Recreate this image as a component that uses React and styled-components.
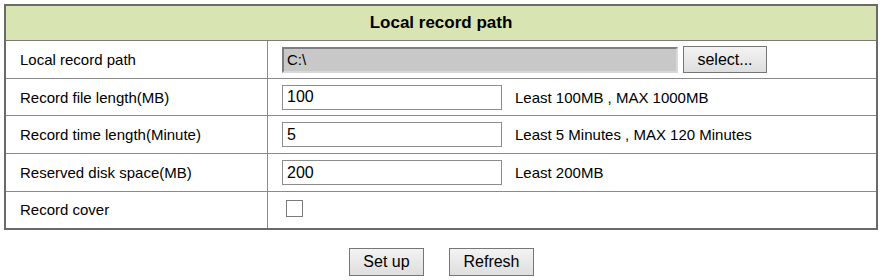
import React from "react";
import styled, { createGlobalStyle } from "styled-components";

const GlobalStyle = createGlobalStyle`
  body {
    margin: 0;
    background: #ffffff;
    font-family: "Liberation Sans", Arial, sans-serif;
    color: #000;
  }
`;

const Page = styled.div`
  padding: 4px 4px 0 4px;
  width: 882px;
  box-sizing: border-box;
`;

const Table = styled.table`
  width: 874px;
  border-collapse: collapse;
  border: 2px solid #6a6a6a;
  font-size: 15px;
`;

const HeadCell = styled.th`
  height: 34px;
  padding: 0;
  background: #d8e5b2;
  border: 1px solid #7a7a7a;
  font-size: 17px;
  font-weight: bold;
  text-align: center;
`;

const Row = styled.tr`
  height: ${p => p.h || 37}px;
`;

const Label = styled.td`
  width: 247px;
  padding: 0 0 0 14px;
  border: 1px solid #8a8a8a;
  text-align: left;
`;

const Value = styled.td`
  padding: 0 0 0 14px;
  border: 1px solid #8a8a8a;
`;

const Line = styled.div`
  display: flex;
  align-items: center;
  gap: ${p => p.gap || 13}px;
`;

const PathBox = styled.input`
  width: 396px;
  height: 26px;
  box-sizing: border-box;
  padding: 0 3px;
  background: #c8c8c8;
  border: 2px solid;
  border-color: #7e7e7e #d8d8d8 #d8d8d8 #7e7e7e;
  font: 15px "Liberation Sans", Arial, sans-serif;
  color: #000;
  outline: none;
`;

const TextBox = styled.input`
  width: 220px;
  height: 25px;
  box-sizing: border-box;
  padding: 0 4px;
  border: 1px solid #8c8c8c;
  background: #fff;
  font: 16px "Liberation Sans", Arial, sans-serif;
  color: #000;
  outline: none;
`;

const Button = styled.button`
  width: ${p => p.w}px;
  height: ${p => p.hgt || 28}px;
  padding: 0;
  border: 1px solid #767676;
  background: linear-gradient(#f3f3f3, #dedede);
  font: 16px "Liberation Sans", Arial, sans-serif;
  color: #000;
  cursor: pointer;
`;

const Hint = styled.span`
  font-size: 15px;
`;

const Check = styled.span`
  display: inline-block;
  width: 15px;
  height: 15px;
  border: 1px solid #7a7a7a;
  background: #fff;
  margin-left: 4px;
`;

const Actions = styled.div`
  display: flex;
  justify-content: center;
  gap: 25px;
  margin-top: 18px;
  padding-left: 1px;
`;

const rows = [
  { label: "Record file length(MB)", value: "100", hint: "Least 100MB , MAX 1000MB", h: 37 },
  { label: "Record time length(Minute)", value: "5", hint: "Least 5 Minutes , MAX 120 Minutes", h: 38 },
  { label: "Reserved disk space(MB)", value: "200", hint: "Least 200MB", h: 38 },
];

export default function App() {
  return (
    <Page>
      <GlobalStyle />
      <Table>
        <tbody>
          <tr>
            <HeadCell colSpan={2}>Local record path</HeadCell>
          </tr>
          <Row h={38}>
            <Label>Local record path</Label>
            <Value>
              <Line gap={5}>
                <PathBox defaultValue="C:\" readOnly />
                <Button w={84} hgt={27}>select...</Button>
              </Line>
            </Value>
          </Row>
          {rows.map(r => (
            <Row key={r.label} h={r.h}>
              <Label>{r.label}</Label>
              <Value>
                <Line>
                  <TextBox defaultValue={r.value} />
                  <Hint>{r.hint}</Hint>
                </Line>
              </Value>
            </Row>
          ))}
          <Row h={37}>
            <Label>Record cover</Label>
            <Value>
              <Check />
            </Value>
          </Row>
        </tbody>
      </Table>
      <Actions>
        <Button w={75}>Set up</Button>
        <Button w={85}>Refresh</Button>
      </Actions>
    </Page>
  );
}
